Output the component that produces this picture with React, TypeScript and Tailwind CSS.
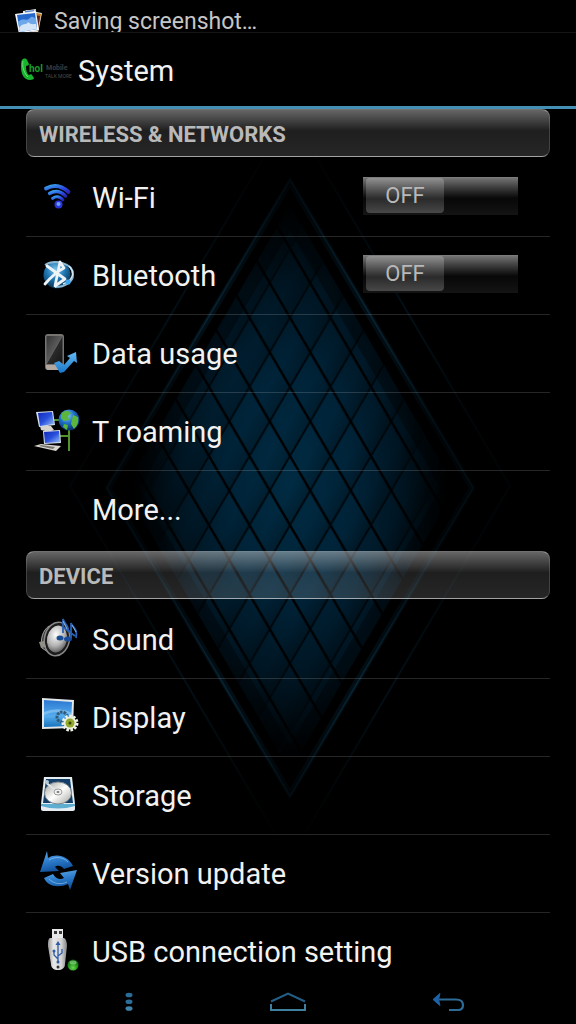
import { useState } from 'react';
import type { ReactNode } from 'react';

interface Setting {
  label: string;
  icon?: ReactNode;
  toggle?: boolean;
}

const Wallpaper = () => (
  <svg
    className="absolute inset-0 h-full w-full"
    viewBox="0 0 576 1024"
    preserveAspectRatio="xMidYMid slice"
    aria-hidden="true"
  >
    <defs>
      <radialGradient id="glow" gradientUnits="userSpaceOnUse" cx="0" cy="0" r="1" gradientTransform="translate(290 482) scale(158 282)">
        <stop offset="0" stopColor="#002b42" />
        <stop offset="0.4" stopColor="#002338" />
        <stop offset="0.7" stopColor="#001522" />
        <stop offset="1" stopColor="#000" />
      </radialGradient>
      <linearGradient id="cell" x1="0" y1="0" x2="1" y2="1">
        <stop offset="0" stopColor="#000" stopOpacity="0" />
        <stop offset="0.5" stopColor="#000" stopOpacity="0" />
        <stop offset="1" stopColor="#000" stopOpacity="0.45" />
      </linearGradient>
      <pattern id="lattice" patternUnits="userSpaceOnUse" x="290" y="456" width="40.5" height="69.2">
        <path d="M20.25 -34.6L40.5 0L20.25 34.6L0 0Z" fill="url(#cell)" />
        <path d="M20.25 34.6L40.5 69.2L20.25 103.8L0 69.2Z" fill="url(#cell)" />
        <path d="M0 0L20.25 34.6L0 69.2L-20.25 34.6Z" fill="url(#cell)" />
        <path d="M40.5 0L60.75 34.6L40.5 69.2L20.25 34.6Z" fill="url(#cell)" />
        <path d="M-2 72.6L42.500 -3.4" stroke="#00070c" strokeWidth="2" />
        <path d="M-2 -3.4L42.500 72.6" stroke="#000" strokeWidth="2.4" />
      </pattern>
      <linearGradient id="edge" gradientUnits="userSpaceOnUse" x1="0" y1="140" x2="0" y2="840">
        <stop offset="0" stopColor="#0a3d58" stopOpacity="0" />
        <stop offset="0.25" stopColor="#0a3d58" stopOpacity="0.8" />
        <stop offset="0.42" stopColor="#0a3d58" stopOpacity="0.25" />
        <stop offset="0.6" stopColor="#0a3d58" stopOpacity="0.25" />
        <stop offset="0.78" stopColor="#0a3d58" stopOpacity="0.8" />
        <stop offset="1" stopColor="#0a3d58" stopOpacity="0" />
      </linearGradient>
    </defs>
    <path d="M290 205L456 488L290 771L124 488Z" fill="url(#glow)" />
    <path d="M290 205L456 488L290 771L124 488Z" fill="url(#lattice)" />
    <g fill="none" stroke="#000" opacity="0.35">
      <path d="M290 205L456 488L290 771L124 488Z" strokeWidth="26" />
      <path d="M290 205L456 488L290 771L124 488Z" strokeWidth="12" />
    </g>
    <g fill="none" stroke="url(#edge)">
      <path d="M290 182L472 488L290 794L108 488Z" strokeWidth="6" opacity="0.3" />
      <path d="M290 180L473 488L290 796L107 488Z" strokeWidth="1.5" opacity="0.6" />
      <path d="M290 113L510 486L290 859L70 486Z" strokeWidth="2" opacity="0.3" />
    </g>
  </svg>
);

const GalleryIcon = () => (
  <svg className="h-7 w-8 shrink-0" viewBox="0 0 32 28" aria-hidden="true">
    <path d="M12 4l16 3-4 20-16-3z" fill="#d8d8d8" />
    <path d="M18 6l9 2-3 17-8-2z" fill="#c07a20" />
    <path d="M20 9l3 5-2 10 3-1 2-13z" fill="#5c1d10" />
    <path d="M9 5l13-2-1 7-12 3z" fill="#e2e6ea" />
    <path d="M11 5l9-1v5l-9 2z" fill="#5a86c8" />
    <path d="M1 8l21-3 3 19-20 4z" fill="#f3f6fa" />
    <path d="M3 9l18-2 2 16-17 3z" fill="#2468cc" />
    <path d="M4 16c5-5 8 0 12-4 3-3 4 1 6 0l1 11-17 3z" fill="#6ea8ea" />
    <path d="M5 22c4-6 7-2 9-6 3 3 5 2 8 2l1 5-17 3z" fill="#d4e5f8" />
  </svg>
);

const Logo = () => (
  <svg className="h-6 w-13 shrink-0" viewBox="0 0 52 24" aria-hidden="true">
    <path d="M3 1c2-1 4 0 4 1l2 4c0 1-2 2-3 2 0 5 1 8 3 9 1-1 3-1 3 0l2 3c0 1-2 2-4 2C4 22 1 16 1 9c0-4 0-7 2-8z" fill="#17b32c" />
    <path d="M3 3c-1 4 0 11 5 16" stroke="#6de077" strokeWidth="1" fill="none" />
    <text x="9" y="14" fontSize="10" fontWeight="700" fontFamily="Roboto, sans-serif" fill="#179c28">hol</text>
    <text x="26" y="12" fontSize="7" fontWeight="700" fontFamily="Roboto, sans-serif" fill="#3c3c3c">Mobile</text>
    <text x="25" y="20" fontSize="5" fontFamily="Roboto, sans-serif" fill="#4c4c4c">TALK MORE</text>
  </svg>
);

const WifiIcon = () => (
  <svg className="h-12 w-12" viewBox="0 0 48 48" fill="none" strokeLinecap="round" aria-hidden="true">
    <defs>
      <linearGradient id="wifi" x1="0" y1="0" x2="1" y2="1">
        <stop offset="0" stopColor="#38a0ec" />
        <stop offset="0.6" stopColor="#2a48e0" />
        <stop offset="1" stopColor="#2626b4" />
      </linearGradient>
    </defs>
    <path d="M12 14.500Q24 8 34.500 18" stroke="url(#wifi)" strokeWidth="3.800" />
    <path d="M15.500 19.500Q24 14.500 31.500 22" stroke="url(#wifi)" strokeWidth="3.200" />
    <path d="M18.500 24.500Q24 20.500 29 26" stroke="url(#wifi)" strokeWidth="2.800" />
    <circle cx="24.500" cy="30.500" r="4" fill="#2836d8" />
    <circle cx="24.500" cy="30" r="2" fill="#6c9cf8" />
  </svg>
);

const BluetoothIcon = () => (
  <svg className="h-12 w-12" viewBox="0 0 48 48" fill="none" aria-hidden="true">
    <defs>
      <radialGradient id="btBall" cx="0.45" cy="0.3" r="0.7">
        <stop offset="0" stopColor="#7cc2ea" />
        <stop offset="0.5" stopColor="#1f76b4" />
        <stop offset="1" stopColor="#08324f" />
      </radialGradient>
    </defs>
    <circle cx="23" cy="23" r="13.500" fill="url(#btBall)" />
    <path d="M11 13C20 7 40 11 39 23c0 7-8 12-18 12" stroke="#8bb8d2" strokeWidth="2" />
    <path d="M35 14c7 7 3 15-6 18" stroke="#d3e7f2" strokeWidth="1.400" />
    <path d="M11 32C17 25 22 20 30 16L26 10L21 34L31 27L13 14" stroke="#edf3f6" strokeWidth="2.800" strokeLinejoin="round" strokeLinecap="round" />
    <circle cx="34" cy="30" r="2.600" fill="#3da6f0" />
  </svg>
);

const DataIcon = () => (
  <svg className="h-12 w-12" viewBox="0 0 48 48" aria-hidden="true">
    <defs>
      <linearGradient id="screen" x1="0" y1="0" x2="1" y2="1">
        <stop offset="0" stopColor="#343434" />
        <stop offset="0.5" stopColor="#5c5c5c" />
        <stop offset="0.52" stopColor="#2a2a2a" />
        <stop offset="1" stopColor="#161616" />
      </linearGradient>
      <linearGradient id="arrow" x1="0" y1="0" x2="0" y2="1">
        <stop offset="0" stopColor="#66baf4" />
        <stop offset="1" stopColor="#1677c8" />
      </linearGradient>
    </defs>
    <rect x="11" y="4" width="19" height="36" rx="3" fill="#77736f" />
    <rect x="12.500" y="6" width="16" height="28" rx="1" fill="url(#screen)" />
    <path d="M12 35h17v2c0 2-1 3-3 3H14c-1 0-2-1-2-3z" fill="#b3a8a0" />
    <path d="M20 33l5-2 5 4 6-7-3-2 9-4 1 11-3-2-10 11-4 1z" fill="url(#arrow)" />
  </svg>
);

const RoamingIcon = () => (
  <svg className="h-12 w-12" viewBox="0 0 48 48" aria-hidden="true">
    <defs>
      <linearGradient id="monitor" x1="0" y1="0" x2="1" y2="1">
        <stop offset="0" stopColor="#1128b8" />
        <stop offset="0.5" stopColor="#2850dc" />
        <stop offset="1" stopColor="#9cc4f4" />
      </linearGradient>
      <radialGradient id="globe" cx="0.4" cy="0.3" r="0.7">
        <stop offset="0" stopColor="#8cd0f6" />
        <stop offset="0.5" stopColor="#1e6fc8" />
        <stop offset="1" stopColor="#08306c" />
      </radialGradient>
    </defs>
    <path d="M18 12h8M26 28h9M35 20v23" stroke="#52942a" strokeWidth="2" fill="none" />
    <path d="M6 18h11l3 4-5 2-8-2z" fill="#d6d3cc" />
    <path d="M2 4l17-1 2 14-16 2z" fill="#d5dced" />
    <path d="M4 5l14-1 2 12-14 2z" fill="url(#monitor)" />
    <path d="M9 23l17-1 1 13-17 1z" fill="#d5dced" />
    <path d="M10 24l15-1 1 11-15 1z" fill="url(#monitor)" />
    <path d="M7 36l20 2-5 5-22-5z" fill="#dad8d2" />
    <path d="M7 37l14 2-2 2-14-3z" fill="#77746e" />
    <circle cx="35" cy="12" r="10.500" fill="url(#globe)" />
    <path d="M28 5c4-3 7-2 9 0l-3 3 1 4-5 1-3-3zM39 7l5 2c1 6-1 9-4 12l-3-5zM30 16l4 1-1 5-4-3z" fill="#5ab63c" />
  </svg>
);

const SoundIcon = () => (
  <svg className="h-12 w-12" viewBox="0 0 48 48" fill="none" aria-hidden="true">
    <defs>
      <radialGradient id="cone" cx="0.4" cy="0.35" r="0.7">
        <stop offset="0" stopColor="#fff" />
        <stop offset="0.6" stopColor="#b4b4b4" />
        <stop offset="1" stopColor="#5a5a5a" />
      </radialGradient>
    </defs>
    <path d="M15 10C9 14 6 23 8 32l6 4 7-24z" fill="#3c3c3c" stroke="#a8a29a" strokeWidth="1" />
    <ellipse cx="23" cy="23" rx="12.500" ry="17" transform="rotate(12 23 23)" fill="#1c1c1c" stroke="#888" strokeWidth="1.500" />
    <ellipse cx="23" cy="23" rx="10" ry="13.500" transform="rotate(12 23 23)" fill="url(#cone)" />
    <path d="M5 26l5-1 2 6-5 1z" fill="#918d87" />
    <ellipse cx="26" cy="22" rx="3.500" ry="2.500" fill="#174b92" />
    <ellipse cx="34" cy="23" rx="4" ry="2.500" fill="#184a9c" />
    <path d="M29 17V3c2 6 6 6 5 13M37 22V7c2 5 7 6 5 15M29 11l12 9" stroke="#2a61b2" strokeWidth="1.800" />
    <path d="M29 5l4 8M38 9l4 7" stroke="#82b2ea" strokeWidth="1" />
  </svg>
);

const DisplayIcon = () => (
  <svg className="h-12 w-12" viewBox="0 0 48 48" aria-hidden="true">
    <defs>
      <linearGradient id="display" x1="0" y1="0" x2="0" y2="1">
        <stop offset="0" stopColor="#2b78d2" />
        <stop offset="0.6" stopColor="#55acee" />
        <stop offset="1" stopColor="#1673bc" />
      </linearGradient>
    </defs>
    <path d="M8 4l32 2-1 28-31 1z" fill="#e3e7ea" />
    <path d="M10 6l28 2-1 24-27 1z" fill="url(#display)" />
    <path d="M10 18q14-6 28 1v2q-14-6-28 0z" fill="#a5d7f8" opacity="0.5" />
    <circle cx="28" cy="23" r="5" fill="none" stroke="#335a74" strokeWidth="3" strokeDasharray="2.500 1" />
    <circle cx="36" cy="29" r="7" fill="none" stroke="#eef2e8" strokeWidth="3" strokeDasharray="2.500 1.500" />
    <circle cx="36" cy="29" r="6.500" fill="#e9efdf" />
    <circle cx="36" cy="29" r="4.500" fill="#94a82c" />
    <circle cx="36" cy="29" r="1.500" fill="#36440e" />
  </svg>
);

const StorageIcon = () => (
  <svg className="h-12 w-12" viewBox="0 0 48 48" aria-hidden="true">
    <defs>
      <linearGradient id="disk" x1="0" y1="0" x2="1" y2="1">
        <stop offset="0" stopColor="#9c9c98" />
        <stop offset="0.5" stopColor="#fff" />
        <stop offset="1" stopColor="#a4a49e" />
      </linearGradient>
    </defs>
    <path d="M10 5h28l3 27v5c0 1-1 2-2 2H9c-1 0-2-1-2-2v-5z" fill="#e5edf3" />
    <path d="M12 7h24l3 24H9z" fill="#133e68" />
    <path d="M7 32h34v2q-17 5-34 0z" fill="#5daed0" />
    <ellipse cx="24" cy="21" rx="13.500" ry="11" fill="url(#disk)" stroke="#7e8890" strokeWidth="1" />
    <ellipse cx="24" cy="20" rx="4" ry="3" fill="#f5f5f5" stroke="#999" strokeWidth="1" />
    <ellipse cx="24" cy="20" rx="1.500" ry="1" fill="#777" />
    <path d="M13 10l8 7-1 1-8-6z" fill="#dfe6ea" />
    <circle cx="13" cy="10" r="2" fill="#b8c6d0" />
  </svg>
);

const UpdateIcon = () => (
  <svg className="h-12 w-12" viewBox="0 0 48 48" aria-hidden="true">
    <defs>
      <linearGradient id="sync" x1="0" y1="0" x2="0.3" y2="1">
        <stop offset="0" stopColor="#6cb2ec" />
        <stop offset="0.5" stopColor="#2f7fce" />
        <stop offset="1" stopColor="#11529c" />
      </linearGradient>
    </defs>
    <path d="M13 1l1 7c9-5 20-2 25 8l-9 3c-3-4-7-4-9-2l4 4-19 1z" fill="url(#sync)" />
    <path d="M36 40l-2-6c-9 4-20 3-24-6l9-4c3 5 7 6 11 4l-4-5 17-3z" fill="url(#sync)" />
    <path d="M15 10c7-4 14-3 19 2M33 32c-6 3-13 2-18-3" stroke="#9bd0f6" strokeWidth="1" fill="none" opacity="0.6" />
  </svg>
);

const UsbIcon = () => (
  <svg className="h-12 w-12" viewBox="0 0 48 48" aria-hidden="true">
    <defs>
      <linearGradient id="stick" x1="0" y1="0" x2="1" y2="0">
        <stop offset="0" stopColor="#9a9a9a" />
        <stop offset="0.3" stopColor="#e9e9e9" />
        <stop offset="0.7" stopColor="#d3d3d3" />
        <stop offset="1" stopColor="#858585" />
      </linearGradient>
      <radialGradient id="led" cx="0.5" cy="0.75" r="0.7">
        <stop offset="0" stopColor="#6cd850" />
        <stop offset="0.6" stopColor="#1f8e1a" />
        <stop offset="1" stopColor="#0c5c0e" />
      </radialGradient>
    </defs>
    <rect x="18" y="1" width="11" height="10" fill="#e8e8e8" />
    <path d="M20 3h3v3h-3zM25 3h3v3h-3z" fill="#3a3a3a" />
    <path d="M16 10h14c2 1 3 4 3 8l-2 18c0 4-3 6-7 6s-7-2-7-6l-3-18c0-4 0-7 2-8z" fill="url(#stick)" />
    <path d="M24 16v18M24 31l-4-4v-4M24 28l4-3v-4" stroke="#2d5ca4" strokeWidth="1.300" fill="none" />
    <path d="M24 13l2.500 4h-5z" fill="#2d5ca4" />
    <circle cx="20" cy="23" r="1.500" fill="#2d5ca4" />
    <circle cx="24" cy="34" r="1.500" fill="#2d5ca4" />
    <circle cx="24" cy="39" r="1.500" fill="#333" />
    <circle cx="39" cy="37" r="5.500" fill="url(#led)" />
    <ellipse cx="39" cy="34.500" rx="3.500" ry="2" fill="#b7f0a8" opacity="0.5" />
  </svg>
);

const wireless: Setting[] = [
  { label: 'Wi-Fi', icon: <WifiIcon />, toggle: true },
  { label: 'Bluetooth', icon: <BluetoothIcon />, toggle: true },
  { label: 'Data usage', icon: <DataIcon /> },
  { label: 'T roaming', icon: <RoamingIcon /> },
  { label: 'More...' },
];

const device: Setting[] = [
  { label: 'Sound', icon: <SoundIcon /> },
  { label: 'Display', icon: <DisplayIcon /> },
  { label: 'Storage', icon: <StorageIcon /> },
  { label: 'Version update', icon: <UpdateIcon /> },
  { label: 'USB connection setting', icon: <UsbIcon /> },
];

const Toggle = ({ label }: { label: string }) => {
  const [on, setOn] = useState(false);

  return (
    <button
      type="button"
      role="switch"
      aria-checked={on}
      aria-label={label}
      onClick={() => setOn(!on)}
      className={`mr-8 mb-1 flex h-[38px] w-[155px] border-t border-[#7c7c7c] bg-gradient-to-b from-[#747474] via-[#080808] via-55% to-[#141414] pr-0.5 pb-0.5 pl-[3px] ${on ? 'justify-end' : 'justify-start'}`}
    >
      <span className="flex h-full w-[78px] items-center justify-center rounded-sm bg-gradient-to-b from-[#929292] via-[#2a2a2a] via-60% to-[#484848] text-[22px] text-[#b8b8b8]">
        {on ? 'ON' : 'OFF'}
      </span>
    </button>
  );
};

const SettingRow = ({ label, icon, toggle }: Setting) => (
  <li className="flex h-[78px] items-center border-b border-white/15 last:border-b-0">
    {toggle ? (
      <>
        <span className="ml-2 w-12 shrink-0">{icon}</span>
        <span className="ml-2.5 flex-1 pt-0.5">{label}</span>
        <Toggle label={label} />
      </>
    ) : (
      <a href="#" className="flex h-full flex-1 items-center">
        <span className="ml-2 w-12 shrink-0">{icon}</span>
        <span className="ml-2.5 pt-0.5">{label}</span>
      </a>
    )}
  </li>
);

const Section = ({ title, items }: { title: string; items: Setting[] }) => (
  <section className="mb-0.5">
    <h2 className="mb-0.5 flex h-12 items-center rounded-lg border border-t-white/35 border-r-white/15 border-b-white/40 border-l-white/15 bg-gradient-to-b from-white/40 via-white/12 via-45% to-white/15 px-3 pt-0.5 text-[22px] font-bold text-[#b9b9b9]">
      {title}
    </h2>
    <ul className="text-[29px] text-[#f2f2f2]">
      {items.map((item) => (
        <SettingRow key={item.label} {...item} />
      ))}
    </ul>
  </section>
);

const App = () => {
  return (
    <div className="relative flex h-screen flex-col overflow-hidden bg-black font-[Roboto,sans-serif]">
      <Wallpaper />

      {/* Status bar */}
      <div className="relative flex h-8 shrink-0 items-start gap-2 overflow-hidden pt-1.5 pl-3.5 text-[23px] leading-8 text-[#c6c6c6]">
        <GalleryIcon />
        <span>Saving screenshot…</span>
      </div>

      {/* Title bar */}
      <header className="relative flex h-[77px] shrink-0 items-center gap-1.5 border-t border-b-3 border-t-[#151515] border-b-[#4390b4] bg-black pl-5">
        <Logo />
        <h1 className="pt-1 text-[29px] text-[#f2f2f2]">System</h1>
      </header>

      <main className="relative min-h-0 flex-1 overflow-hidden px-[26px]">
        <Section title="WIRELESS & NETWORKS" items={wireless} />
        <Section title="DEVICE" items={device} />
      </main>

      {/* Navigation keys */}
      <nav className="relative grid h-11 shrink-0 grid-cols-3 bg-black px-12">
        <button type="button" aria-label="Menu" className="flex items-center justify-center">
          <svg className="h-5 w-10" viewBox="0 0 40 20" fill="#2b6d98">
            <ellipse cx="21" cy="3" rx="3.500" ry="2.300" />
            <ellipse cx="21" cy="9.700" rx="3.500" ry="2.300" />
            <ellipse cx="21" cy="16.500" rx="3.500" ry="2.300" fill="#3f83a8" />
          </svg>
        </button>
        <button type="button" aria-label="Home" className="flex items-center justify-center">
          <svg className="h-5 w-10" viewBox="0 0 40 20" fill="none" strokeWidth="2">
            <path d="M3 9.500L20 1.500L37 9.500" stroke="#245f88" />
            <path d="M3 12v6h34v-6" stroke="#40809f" />
          </svg>
        </button>
        <button type="button" aria-label="Back" className="flex items-center justify-center">
          <svg className="h-5 w-10" viewBox="0 0 40 20" fill="none">
            <path d="M11 7.500H28Q35 7.500 35 13Q35 18 30 18H21" stroke="#2d6c97" strokeWidth="2.200" />
            <path d="M12 1.500L5 7.500L12 13.500L10.500 7.500Z" fill="#1b62a6" stroke="#1b62a6" />
          </svg>
        </button>
      </nav>
    </div>
  );
};

export default App;
